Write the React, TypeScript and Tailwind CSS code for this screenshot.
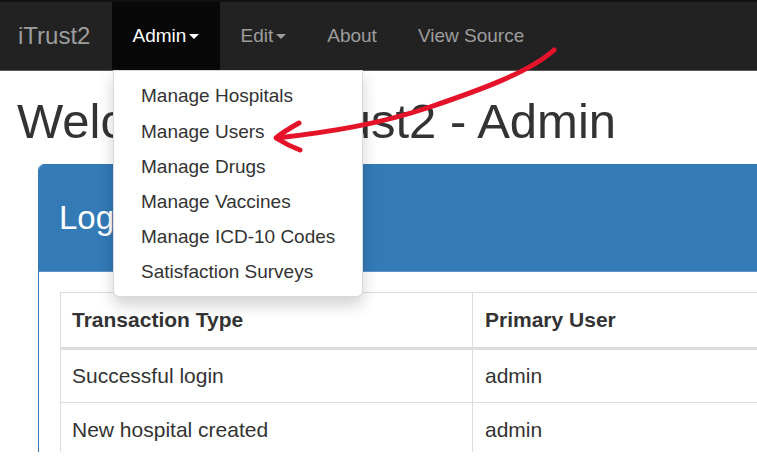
import React from "react";

const Caret = ({ color }: { color: string }) => (
  <span
    className="inline-block ml-[3px] align-middle"
    style={{
      width: 0,
      height: 0,
      borderLeft: "5px solid transparent",
      borderRight: "5px solid transparent",
      borderTop: `5px solid ${color}`,
    }}
  />
);

export default function App() {
  const items = [
    "Manage Hospitals",
    "Manage Users",
    "Manage Drugs",
    "Manage Vaccines",
    "Manage ICD-10 Codes",
    "Satisfaction Surveys",
  ];
  return (
    <div
      className="relative w-[757px] h-[474px] bg-white overflow-hidden"
      style={{ fontFamily: '"Liberation Sans", Arial, sans-serif' }}
    >
      <div className="h-[452px] overflow-hidden">
        {/* Navbar */}
        <div className="h-[71px] bg-[#222222] border-t-[2px] border-t-[#111] border-b border-b-[#5a5a5a] flex items-stretch">
          <div className="pl-[18px] pr-[22px] flex items-center text-[24px] text-[#9d9d9d]">iTrust2</div>
          <div className="relative bg-[#080808] w-[108px] pl-[20px] flex items-center text-[19px] text-white">
            Admin
            <Caret color="#ffffff" />
          </div>
          <div className="pl-[20px] pr-[21px] flex items-center text-[19px] text-[#9d9d9d]">
            Edit
            <Caret color="#9d9d9d" />
          </div>
          <div className="px-[20px] flex items-center text-[19px] text-[#9d9d9d]">About</div>
          <div className="px-[21px] flex items-center text-[19px] text-[#9d9d9d]">View Source</div>
        </div>

        {/* Heading */}
        <h1 className="pl-[17px] pt-[21px] text-[49px] leading-[58px] text-[#333333]">
          Welcome to iTrust2 - Admin
        </h1>

        {/* Panel */}
        <div className="ml-[38px] mt-[14px] w-[760px] border border-[#337ab7] rounded-tl-[6px] bg-white">
          <div className="h-[107px] bg-[#337ab7] border-b border-b-[#5d95c8] flex items-center pl-[20px] text-[33px] text-white rounded-tl-[5px]">
            Logs
          </div>
          <div className="pl-[21px] pt-[20px]">
            <table className="border-collapse text-[21px] text-[#333333]" style={{ width: "760px" }}>
              <thead>
                <tr className="h-[56px]">
                  <th className="w-[412px] border border-[#dddddd] border-b-[3px] text-left pl-[11px] font-bold">
                    Transaction Type
                  </th>
                  <th className="border border-[#dddddd] border-b-[3px] text-left pl-[12px] font-bold">
                    Primary User
                  </th>
                </tr>
              </thead>
              <tbody>
                <tr className="h-[54px]">
                  <td className="border border-[#dddddd] pl-[11px]">Successful login</td>
                  <td className="border border-[#dddddd] pl-[12px]">admin</td>
                </tr>
                <tr className="h-[54px]">
                  <td className="border border-[#dddddd] pl-[11px]">New hospital created</td>
                  <td className="border border-[#dddddd] pl-[12px]">admin</td>
                </tr>
              </tbody>
            </table>
          </div>
        </div>
      </div>

      {/* Dropdown menu */}
      <div className="absolute left-[113px] top-[70px] w-[250px] bg-white border border-[rgba(0,0,0,0.15)] rounded-b-[6px] shadow-[0_8px_16px_rgba(0,0,0,0.18)] pt-[8px] pb-[6px]">
        {items.map((t) => (
          <div key={t} className="h-[35.2px] flex items-center pl-[27px] text-[19px] text-[#333333]">
            {t}
          </div>
        ))}
      </div>

      {/* Red annotation arrow */}
      <svg className="absolute left-0 top-0 pointer-events-none" width="757" height="474" viewBox="0 0 757 474">
        <path
          d="M554 50 C530 72, 480 90, 430 107 S330 132, 277 138"
          fill="none"
          stroke="#e5132a"
          strokeWidth="5"
          strokeLinecap="round"
        />
        <path
          d="M299 123 C290 128, 282 133, 276 138 C284 143, 292 147, 300 150"
          fill="none"
          stroke="#e5132a"
          strokeWidth="5"
          strokeLinecap="round"
          strokeLinejoin="round"
        />
      </svg>
    </div>
  );
}
